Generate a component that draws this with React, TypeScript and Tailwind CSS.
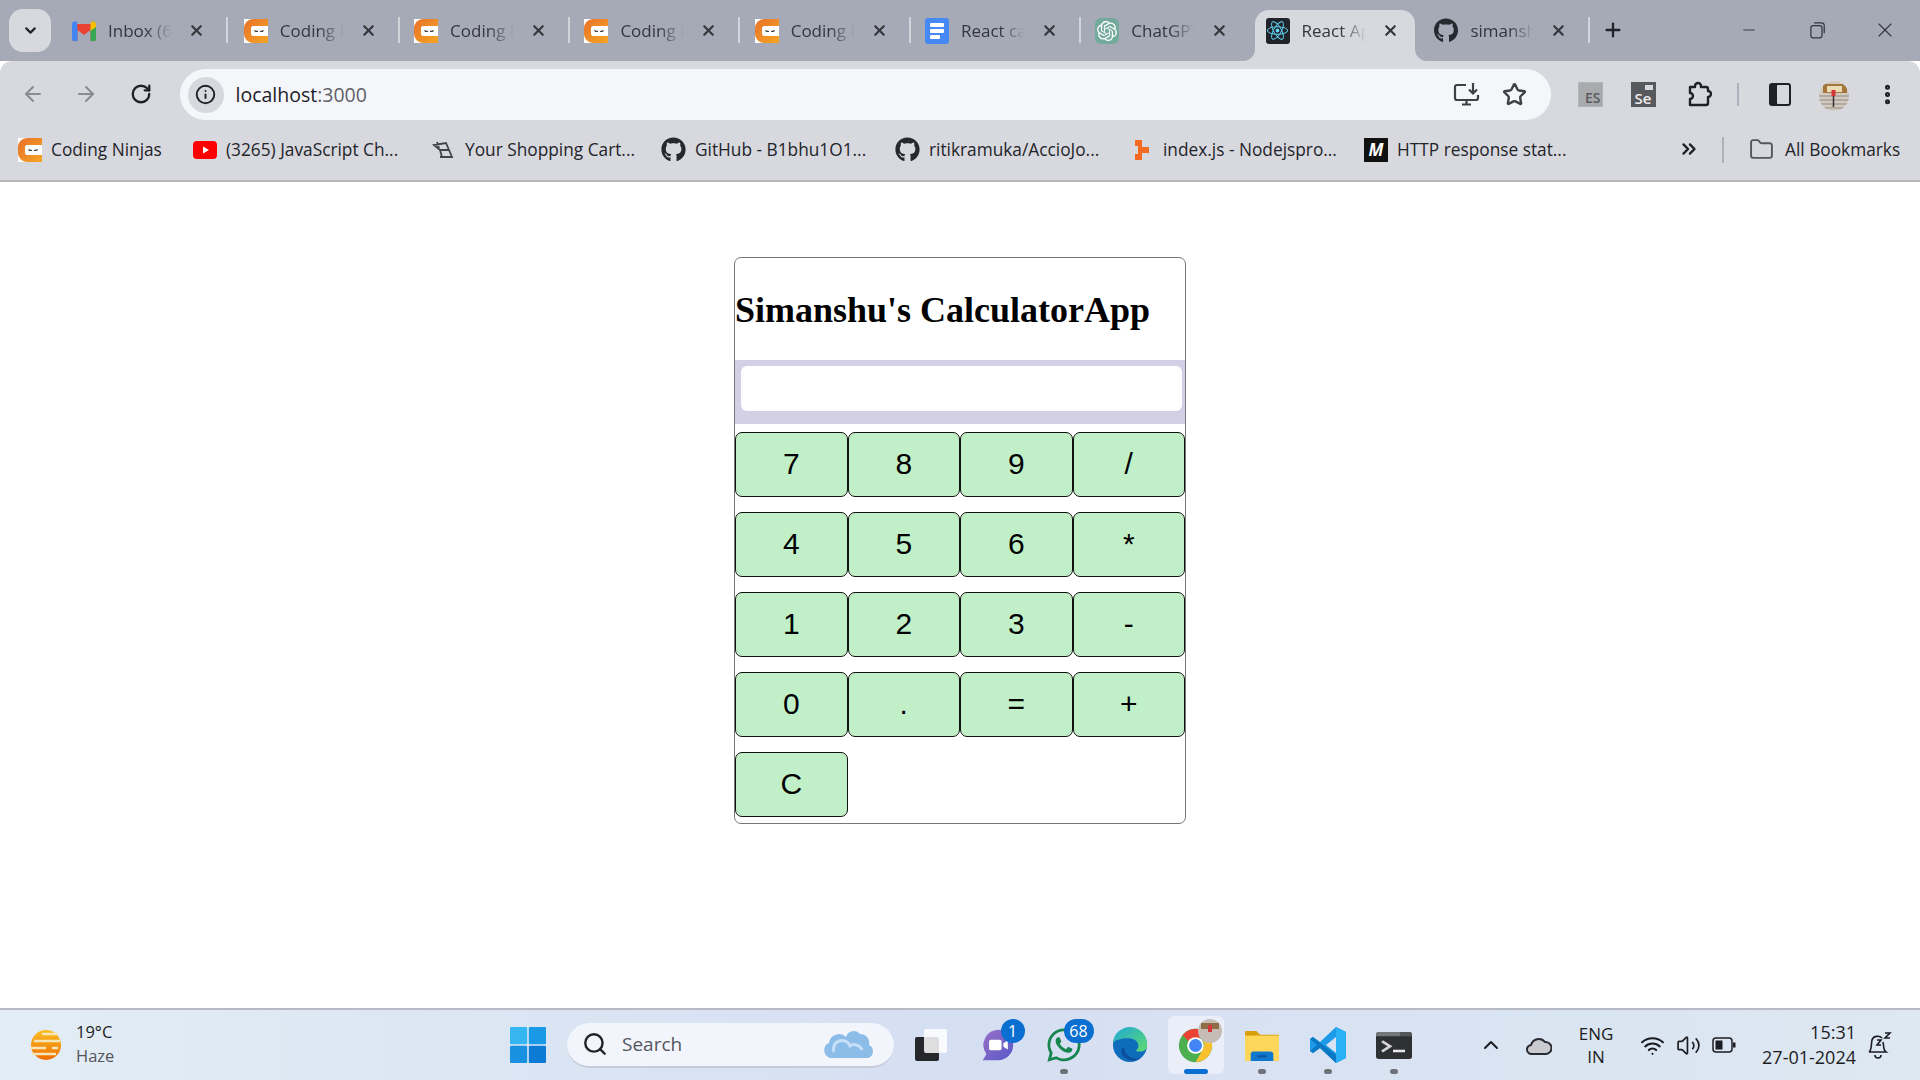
import { ArrowLeft, ArrowRight, ChevronDown, ChevronUp, ChevronsRight, EllipsisVertical, Folder, Info, Minus, Plus, RotateCw, Search, Star, Volume2, Wifi, X } from "lucide-react";
import { FaGithub, FaReact, FaWhatsapp } from "react-icons/fa";
import { SiOpenai } from "react-icons/si";
import type { ReactNode } from "react";

const NinjaIcon = () => (
  <svg width="24" height="24" viewBox="0 0 24 24">
    <rect width="24" height="24" fill="#fff" />
    <defs>
      <linearGradient id="cn" x1="0" y1="0" x2="1" y2="1">
        <stop offset="0" stopColor="#e8702a" />
        <stop offset="1" stopColor="#f5a623" />
      </linearGradient>
    </defs>
    <path d="M9 0H24V7H10A3 3 0 0 0 7 10V14A3 3 0 0 0 10 17H24V24H9A9 9 0 0 1 0 15V9A9 9 0 0 1 9 0Z" fill="url(#cn)" />
    <rect x="7" y="7" width="17" height="10" fill="#fff" rx="3" />
    <path d="M10 11L14 12V13H11ZM20 11L16 12V13H19Z" fill="#444" />
  </svg>
);

const GmailIcon = () => (
  <svg width="24" height="20" viewBox="0 0 24 20">
    <path d="M0 3V18A2 2 0 0 0 2 20H5.500V9L12 14L18.500 9V20H22A2 2 0 0 0 24 18V3" fill="#ea4335" />
    <path d="M0 3A3 3 0 0 1 5 1L5.500 9V20H2A2 2 0 0 1 0 18Z" fill="#4285f4" />
    <path d="M18.500 9V20H22A2 2 0 0 0 24 18V3A3 3 0 0 0 19 1Z" fill="#34a853" />
    <path d="M19 1A3 3 0 0 1 24 3V6L18.500 10V2Z" fill="#fbbc04" />
  </svg>
);

const DocsIcon = () => (
  <svg width="24" height="26" viewBox="0 0 24 26">
    <rect width="24" height="26" rx="3" fill="#4688f4" />
    <rect x="5" y="5" width="14" height="4" rx="1" fill="#fff" />
    <rect x="5" y="11" width="14" height="4" rx="1" fill="#fff" />
    <rect x="5" y="17" width="10" height="4" rx="1" fill="#fff" />
  </svg>
);

const Tab = ({ icon, title, active, sep }: { icon: ReactNode; title: string; active?: boolean; sep?: boolean }) => (
  <div className={`relative flex h-[51px] shrink-0 items-center pb-[10px] pl-[11px] text-[#35363c] ${active ? "mr-[8.800px] w-[160px] rounded-t-[14px] bg-[#d8d9df]" : "w-[170.300px]"}`}>
    <div className="flex w-[24px] shrink-0 justify-center">{icon}</div>
    <span className="ml-[12px] w-[64px] shrink-0 overflow-hidden text-[17px] whitespace-nowrap [mask-image:linear-gradient(to_right,black_60%,transparent)]">{title}</span>
    <X size={17} strokeWidth={3} className="ml-[16px] shrink-0" />
    {sep && <div className="absolute top-[7px] left-[165px] h-[26px] w-[2px] bg-[#d3d4da]" />}
    {active && (
      <>
        <svg width="12" height="12" viewBox="0 0 12 12" className="absolute bottom-0 -left-[12px]">
          <path d="M12 0V12H0A12 12 0 0 0 12 0Z" fill="#d8d9df" />
        </svg>
        <svg width="12" height="12" viewBox="0 0 12 12" className="absolute -right-[12px] bottom-0">
          <path d="M0 0V12H12A12 12 0 0 1 0 0Z" fill="#d8d9df" />
        </svg>
      </>
    )}
  </div>
);

const Bookmark = ({ icon, label, className }: { icon: ReactNode; label: string; className: string }) => (
  <div className={`flex shrink-0 items-center gap-[9px] text-[17.300px] whitespace-nowrap text-[#23242a] ${className}`}>
    {icon}
    <span>{label}</span>
  </div>
);

const TabStrip = () => (
  <div className="flex h-[61px] items-end bg-[#a6aab6]">
    <div className="mb-[9px] ml-[9px] flex h-[43px] w-[42px] shrink-0 items-center justify-center rounded-[14px] bg-[#d8d9df]">
      <ChevronDown size={17} strokeWidth={3} className="text-[#22232a]" />
    </div>
    <div className="ml-[10px] flex h-[51px] items-start">
      <div className="mr-[1.500px]">
        <Tab sep icon={<GmailIcon />} title="Inbox (6" />
      </div>
      <Tab sep icon={<NinjaIcon />} title="Coding Ninjas" />
      <Tab sep icon={<NinjaIcon />} title="Coding Ninjas" />
      <Tab sep icon={<NinjaIcon />} title="Coding Ninjas" />
      <Tab sep icon={<NinjaIcon />} title="Coding Ninjas" />
      <Tab sep icon={<DocsIcon />} title="React calc" />
      <Tab
        icon={
          <div className="flex h-[26px] w-[24px] items-center justify-center rounded-[6px] bg-[#74aa9c]">
            <SiOpenai size={20} color="#fff" />
          </div>
        }
        title="ChatGPT"
      />
      <Tab
        active
        icon={
          <div className="flex h-[26px] w-[24px] items-center justify-center rounded-[3px] bg-[#20232a]">
            <FaReact size={21} color="#61dafb" />
          </div>
        }
        title="React App"
      />
      <Tab sep icon={<FaGithub size={25} color="#24292f" />} title="simanshu" />
      <Plus size={22} strokeWidth={2.500} className="mt-[9px] ml-[8px] shrink-0 text-[#22232a]" />
    </div>
    <div className="ml-auto flex h-[52px] items-center pr-[23px] pb-[10px] text-[#33343a]">
      <Minus size={18} strokeWidth={1.250} />
      <svg width="20" height="20" viewBox="0 0 18 18" fill="none" stroke="currentColor" strokeWidth="1.100" className="ml-[49px]">
        <rect x="3.500" y="5" width="10" height="11" rx="2" />
        <path d="M6.500 2.500H13A2.500 2.500 0 0 1 15.500 5V12" />
      </svg>
      <X size={24} strokeWidth={1.100} className="ml-[46px]" />
    </div>
  </div>
);

const Toolbar = () => (
  <div className="flex h-[67px] items-start rounded-t-[12px] bg-[#d8d9df] pt-[8px]">
    <ArrowLeft size={24} strokeWidth={2} className="mt-[13px] ml-[21px] shrink-0 text-[#8b8c92]" />
    <ArrowRight size={24} strokeWidth={2} className="mt-[13px] ml-[29px] shrink-0 text-[#8b8c92]" />
    <RotateCw size={22} strokeWidth={2.500} className="mt-[14px] ml-[32px] shrink-0 text-[#202127]" />
    <div className="ml-[27.500px] flex h-[51px] w-[1371px] shrink-0 items-center rounded-full bg-[#f5f6f9] pl-[8px]">
      <div className="flex h-[36px] w-[36px] items-center justify-center rounded-full bg-[#d8d9df]">
        <Info size={21} strokeWidth={2.200} className="text-[#202127]" />
      </div>
      <span className="ml-[12px] text-[19.500px] text-[#202127]">
        localhost<span className="text-[#5f6067]">:3000</span>
      </span>
      <svg width="28" height="26" viewBox="0 0 28 26" fill="none" stroke="#3f4046" strokeWidth="2.200" className="mr-[21px] ml-auto">
        <path d="M13 3H4A2 2 0 0 0 2 5V16A2 2 0 0 0 4 18H23A2 2 0 0 0 25 16V13M9 22.500H18M13.500 18V22" />
        <path d="M20 1V11M16 7.500L20 11.500L24 7.500" />
      </svg>
      <Star size={25} strokeWidth={2.300} className="mr-[24px] text-[#3f4046]" />
    </div>
    <div className="mt-[13px] ml-[27px] flex h-[25px] w-[25px] shrink-0 items-end justify-end border border-[#b4b5b9] bg-[#a9aaae] pr-[1px] text-[14px] leading-[17px] font-semibold text-[#5a5b60]">ES</div>
    <div className="relative mt-[13px] ml-[28px] flex h-[25px] w-[25px] shrink-0 items-end justify-center bg-[#58595c] text-[15px] leading-[17px] font-semibold text-[#eeeeee]">
      Se
      <div className="absolute top-[3px] right-[3px] h-[5px] w-[8px] bg-[#d8d9df]" />
    </div>
    <svg width="26" height="26" viewBox="0 0 26 26" fill="none" stroke="#202127" strokeWidth="2.400" className="mt-[12px] ml-[30px] shrink-0">
      <path d="M4 6H9V5A3 3 0 0 1 15 5V6H20A2 2 0 0 1 22 8V10A3 3 0 0 1 22 16V22A2 2 0 0 1 20 24H4V18A3 3 0 0 0 4 12Z" strokeLinejoin="round" />
    </svg>
    <div className="mt-[14px] ml-[25px] h-[23px] w-[2px] shrink-0 bg-[#aeb0bd]" />
    <div className="mt-[14px] ml-[30px] flex h-[23px] w-[22px] shrink-0 justify-end rounded-[3px] border-2 border-[#202127] bg-[#202127]">
      <div className="h-full w-[12px] rounded-[1px] bg-[#d8d9df]" />
    </div>
    <svg width="30" height="30" viewBox="0 0 30 30" className="mt-[12px] ml-[28px] shrink-0">
      <clipPath id="avatar"><circle cx="15" cy="15" r="15" /></clipPath>
      <g clipPath="url(#avatar)">
        <rect width="30" height="30" fill="#d2cac0" />
        <rect x="4" y="3" width="24" height="9" fill="#a5763a" />
        <rect x="8" y="5" width="15" height="6" fill="#e9dcb4" />
        <path d="M0 15H30M0 19H30M0 23H30M0 27H30" stroke="#a89f97" strokeWidth="1.500" />
        <rect x="12.500" y="9" width="4" height="6" fill="#d8353a" />
        <path d="M14.500 15V26" stroke="#3a3030" strokeWidth="1.500" />
      </g>
    </svg>
    <EllipsisVertical size={25} strokeWidth={2.800} className="mt-[13px] ml-[26px] shrink-0 text-[#202127]" />
  </div>
);

const Bookmarks = () => (
  <div className="flex h-[54px] items-start border-b-2 border-[#b4b5ba] bg-[#d8d9df] pt-[9px] pl-[18px]">
    <Bookmark className="w-[175px]" icon={<NinjaIcon />} label="Coding Ninjas" />
    <Bookmark
      className="w-[239px]"
      icon={
        <svg width="24" height="24" viewBox="0 0 24 24">
          <rect y="3" width="24" height="18" rx="4" fill="#f00" />
          <path d="M10 8.500L16 12L10 15.500Z" fill="#fff" />
        </svg>
      }
      label="(3265) JavaScript Ch..."
    />
    <Bookmark
      className="w-[229px]"
      icon={
        <svg width="24" height="24" viewBox="0 0 24 24" fill="none" stroke="#44454a" strokeWidth="1.800">
          <path d="M2 7L14 5L17 12H8ZM8 12L10 19M17 12L20 19H8M5 4L7 10" />
        </svg>
      }
      label="Your Shopping Cart..."
    />
    <Bookmark className="w-[234px]" icon={<FaGithub size={25} color="#24292f" />} label="GitHub - B1bhu1O1..." />
    <Bookmark className="w-[238px]" icon={<FaGithub size={25} color="#24292f" />} label="ritikramuka/AccioJo..." />
    <Bookmark
      className="w-[231px]"
      icon={
        <svg width="21" height="24" viewBox="3 0 21 24" fill="#f26b21">
          <rect x="5" y="2" width="7" height="6" />
          <rect x="12" y="9" width="7" height="6" />
          <rect x="5" y="16" width="7" height="6" />
          <rect x="8" y="8" width="4" height="8" />
        </svg>
      }
      label="index.js - Nodejspro..."
    />
    <Bookmark
      className="w-[314px]"
      icon={
        <div className="flex h-[24px] w-[24px] items-center justify-center bg-[#111] text-[17px] leading-none font-bold text-white italic">M</div>
      }
      label="HTTP response stat..."
    />
    <ChevronsRight size={22} strokeWidth={2.600} className="mt-[1px] shrink-0 text-[#202127]" />
    <div className="ml-[22px] h-[26px] w-[2px] shrink-0 bg-[#aeb0bd]" />
    <div className="ml-[25px] flex shrink-0 items-center gap-[11px] text-[17.300px] whitespace-nowrap text-[#23242a]">
      <Folder size={25} strokeWidth={1.800} className="text-[#55565c]" />
      All Bookmarks
    </div>
  </div>
);

const keys = ["7", "8", "9", "/", "4", "5", "6", "*", "1", "2", "3", "-", "0", ".", "=", "+", "C"];

const Calculator = () => (
  <div className="flex-1 bg-white font-['Liberation_Sans',sans-serif]">
    <div className="mx-auto mt-[75px] w-[452px] rounded-[7px] border border-[#777] pb-[6px]">
      <h1 className="flex h-[102px] items-center pt-[2px] text-[36px] font-bold text-black font-['Liberation_Serif',serif]">Simanshu's CalculatorApp</h1>
      <div className="bg-[#d3d0e6] px-[6px] pt-[6px] pb-[13px]">
        <input className="block h-[45px] w-[441px] rounded-[6px] bg-white outline-none" readOnly />
      </div>
      <div className="mt-[8px] grid grid-cols-4 gap-y-[15px]">
        {keys.map((k) => (
          <button key={k} className="h-[65px] rounded-[7px] border border-[#111] bg-[#c1f0c8] pb-[2px] text-[30px] text-black">
            {k}
          </button>
        ))}
      </div>
    </div>
  </div>
);

const Badge = ({ n, className }: { n: string; className: string }) => (
  <div className={`absolute top-[3px] flex h-[24px] items-center justify-center rounded-full bg-[#0a6fd0] text-[16px] text-white ${className}`}>{n}</div>
);

const TaskIcon = ({ children, dot, active }: { children: ReactNode; dot?: boolean; active?: boolean }) => (
  <div className={`relative flex h-[58px] w-[56px] items-center justify-center rounded-[6px] ${active ? "bg-[#e9eef8]" : ""}`}>
    {children}
    {dot && <div className="absolute bottom-0 left-[24px] h-[5px] w-[8px] rounded-full bg-[#6f7278]" />}
    {active && <div className="absolute bottom-0 left-[16px] h-[5px] w-[24px] rounded-full bg-[#0a6fd0]" />}
  </div>
);

const Taskbar = () => (
  <div className="flex h-[72px] items-center border-t-2 border-[#b5bac4] bg-gradient-to-r from-[#e2edf5] via-[#d5dff2] to-[#dde8f2] text-[#1c1d22]">
    <svg width="36" height="32" viewBox="0 0 36 32" className="ml-[28px] shrink-0">
      <defs>
        <linearGradient id="sun" x1="0" y1="0" x2="0" y2="1">
          <stop offset="0" stopColor="#fbbf24" />
          <stop offset="1" stopColor="#ef6c00" />
        </linearGradient>
      </defs>
      <circle cx="18" cy="16" r="15" fill="url(#sun)" />
      <path d="M14 5H30M6 12H32M2 19H18M24 19H30M4 25H28" stroke="#f5e6b8" strokeWidth="2.500" />
    </svg>
    <div className="ml-[12px] w-[60px] shrink-0 pb-[2px] text-[16.500px] leading-[24px]">
      <div>19°C</div>
      <div className="text-[#55565c]">Haze</div>
    </div>
    <svg width="36" height="36" viewBox="0 0 36 36" className="ml-[374px] shrink-0">
      <rect width="17.200" height="17.200" rx="1" fill="#36b6f0" />
      <rect x="18.800" width="17.200" height="17.200" rx="1" fill="#1a9ae6" />
      <rect y="18.800" width="17.200" height="17.200" rx="1" fill="#1a90e0" />
      <rect x="18.800" y="18.800" width="17.200" height="17.200" rx="1" fill="#0b7bd6" />
    </svg>
    <div className="relative ml-[21px] flex h-[45px] w-[327px] shrink-0 items-center rounded-full border-b-2 border-[#c5cad8] bg-[#f2f5fc] pl-[15px]">
      <Search size={26} strokeWidth={2.200} className="text-[#22232a]" />
      <span className="ml-[14px] text-[19px] text-[#55565c]">Search</span>
      <svg width="56" height="32" viewBox="0 0 56 32" className="absolute right-[16px]">
        <path d="M8 30A8 8 0 0 1 7 15A10 10 0 0 1 24 9A8 8 0 0 1 38 6A9 9 0 0 1 47 17A7 7 0 0 1 46 30Z" fill="#8cbce8" />
        <path d="M12 24A8 8 0 0 1 28 18A8 8 0 0 1 40 22" fill="none" stroke="#c6e0f7" strokeWidth="3" />
      </svg>
    </div>
    <svg width="34" height="34" viewBox="0 0 34 34" className="ml-[20px] shrink-0">
      <rect x="1" y="9" width="24" height="24" rx="2" fill="#26272b" />
      <rect x="10" y="1" width="23" height="24" rx="2" fill="#fff" opacity="0.850" />
    </svg>
    <div className="ml-[21.500px] flex shrink-0 items-center gap-[10px]">
      <TaskIcon>
        <svg width="34" height="34" viewBox="0 0 38 38">
          <defs>
            <linearGradient id="chat" x1="0" y1="0" x2="1" y2="1">
              <stop offset="0" stopColor="#9a71c7" />
              <stop offset="1" stopColor="#5757c8" />
            </linearGradient>
          </defs>
          <path d="M19 2A17 17 0 1 1 19 36H2L6 29A17 17 0 0 1 19 2Z" fill="url(#chat)" />
          <rect x="9" y="13" width="14" height="12" rx="2" fill="#fff" />
          <path d="M25 17L30 14V24L25 21Z" fill="#fff" />
        </svg>
        <Badge n="1" className="right-[1px] w-[24px]" />
      </TaskIcon>
      <TaskIcon dot>
        <FaWhatsapp size={38} color="#17854e" />
        <Badge n="68" className="-right-[2px] w-[30px]" />
      </TaskIcon>
      <TaskIcon>
        <svg width="36" height="36" viewBox="0 0 38 38">
          <defs>
            <linearGradient id="edge" x1="0" y1="0" x2="1" y2="1">
              <stop offset="0" stopColor="#1fa8d8" />
              <stop offset="1" stopColor="#5fdc6c" />
            </linearGradient>
          </defs>
          <circle cx="19" cy="19" r="18" fill="#0f6cbd" />
          <path d="M1 17A18 18 0 0 1 37 19C37 26 30 27 25 25C31 21 27 12 18 12C9 12 3 14 1 17Z" fill="url(#edge)" />
          <path d="M13 21C13 30 22 35 30 33C25 37 14 36 10 28C9 25 10 22 13 21Z" fill="#0b4f9c" />
        </svg>
      </TaskIcon>
      <TaskIcon active>
        <svg width="37" height="37" viewBox="0 0 40 40">
          <circle cx="20" cy="20" r="18" fill="#4caf50" />
          <path d="M20 2A18 18 0 0 1 36 12H20A8 8 0 0 0 12.500 15L6 9A18 18 0 0 1 20 2Z" fill="#ea4335" />
          <path d="M36 12A18 18 0 0 1 20 38L28 24A8 8 0 0 0 28 15Z" fill="#fbc02d" />
          <circle cx="20" cy="20" r="9" fill="#fff" />
          <circle cx="20" cy="20" r="7" fill="#4285f4" />
        </svg>
        <svg width="24" height="24" viewBox="0 0 24 24" className="absolute top-[3px] right-[2px]">
          <circle cx="12" cy="12" r="12" fill="#c5bdb5" />
          <rect x="3" y="4" width="18" height="6" fill="#8f6d47" />
          <rect x="10" y="6" width="4" height="7" fill="#d8353a" />
        </svg>
      </TaskIcon>
      <TaskIcon dot>
        <svg width="36" height="32" viewBox="0 0 36 34">
          <path d="M0 3A1 1 0 0 1 1 2H12L16 6H36V12H0Z" fill="#d99f0a" />
          <rect y="7" width="36" height="27" fill="#fdd65a" />
          <path d="M6 34V27A3 3 0 0 1 9 24H27A3 3 0 0 1 30 27V34Z" fill="#0e78cf" />
          <rect x="13" y="28" width="10" height="2" fill="#0a4f94" />
        </svg>
      </TaskIcon>
      <TaskIcon dot>
        <svg width="36" height="36" viewBox="0 0 36 36">
          <path d="M26 0L36 5V31L26 36L10 21L3 26L0 24V12L3 10L10 15ZM26 10L16 18L26 26Z" fill="#1e9be8" />
          <path d="M26 0L36 5V31L26 36Z" fill="#29b0f5" />
          <path d="M0 12L3 10L26 28V36L10 21L3 26L0 24L7 18Z" fill="#0a78c5" />
        </svg>
      </TaskIcon>
      <TaskIcon dot>
        <svg width="36" height="27" viewBox="0 0 36 32" preserveAspectRatio="none">
          <rect width="36" height="32" rx="3" fill="#2f3033" />
          <path d="M0 3A3 3 0 0 1 3 0H12V5H0ZM12 0H24V5H12Z" fill="#75767a" />
          <path d="M24 0H33A3 3 0 0 1 36 3V5H24Z" fill="#55565a" />
          <path d="M6 11L14 17L6 23" fill="none" stroke="#d5d5d5" strokeWidth="3" />
          <rect x="17" y="21" width="12" height="3" fill="#e8e8e8" />
        </svg>
      </TaskIcon>
    </div>
    <ChevronUp size={24} strokeWidth={2} className="ml-[57.500px] shrink-0" />
    <svg width="26" height="22" viewBox="0 0 26 22" fill="#c9cbd0" stroke="#2a2b30" strokeWidth="2" className="ml-[23px] shrink-0">
      <path d="M6 20A4.500 4.500 0 0 1 5 11A8 8 0 0 1 19 8A6 6 0 0 1 20 20Z" />
    </svg>
    <div className="ml-[25px] w-[38px] shrink-0 text-center text-[17px] leading-[23px]">
      <div>ENG</div>
      <div>IN</div>
    </div>
    <Wifi size={25} strokeWidth={2} className="ml-[25px] shrink-0" />
    <Volume2 size={25} strokeWidth={1.600} className="ml-[11px] shrink-0" />
    <svg width="24" height="16" viewBox="0 0 24 16" className="ml-[11px] shrink-0">
      <rect x="1" y="1" width="19" height="14" rx="3" fill="none" stroke="#1c1d22" strokeWidth="1.500" />
      <rect x="3.500" y="3.500" width="7" height="9" fill="#1c1d22" />
      <rect x="21" y="5.500" width="2.500" height="5" fill="#1c1d22" />
    </svg>
    <div className="ml-[26px] w-[94px] shrink-0 text-right text-[18px] leading-[25px] whitespace-nowrap">
      <div>15:31</div>
      <div>27-01-2024</div>
    </div>
    <svg width="26" height="30" viewBox="0 0 26 30" fill="none" stroke="#1c1d22" strokeWidth="1.600" className="ml-[10px] shrink-0">
      <path d="M3 22C6 20 5 14 6 10C7 6 13 5 16 8M17 12C18 16 17 20 20 22H3M9 25A3 3 0 0 0 15 25M11 10L15 10L11 15L15 15M19 3H24L19 8H24" />
    </svg>
  </div>
);

export default function App() {
  return (
    <div className="flex h-screen w-screen flex-col overflow-hidden font-['Open_Sans',sans-serif]">
      <TabStrip />
      <Toolbar />
      <Bookmarks />
      <Calculator />
      <Taskbar />
    </div>
  );
}
